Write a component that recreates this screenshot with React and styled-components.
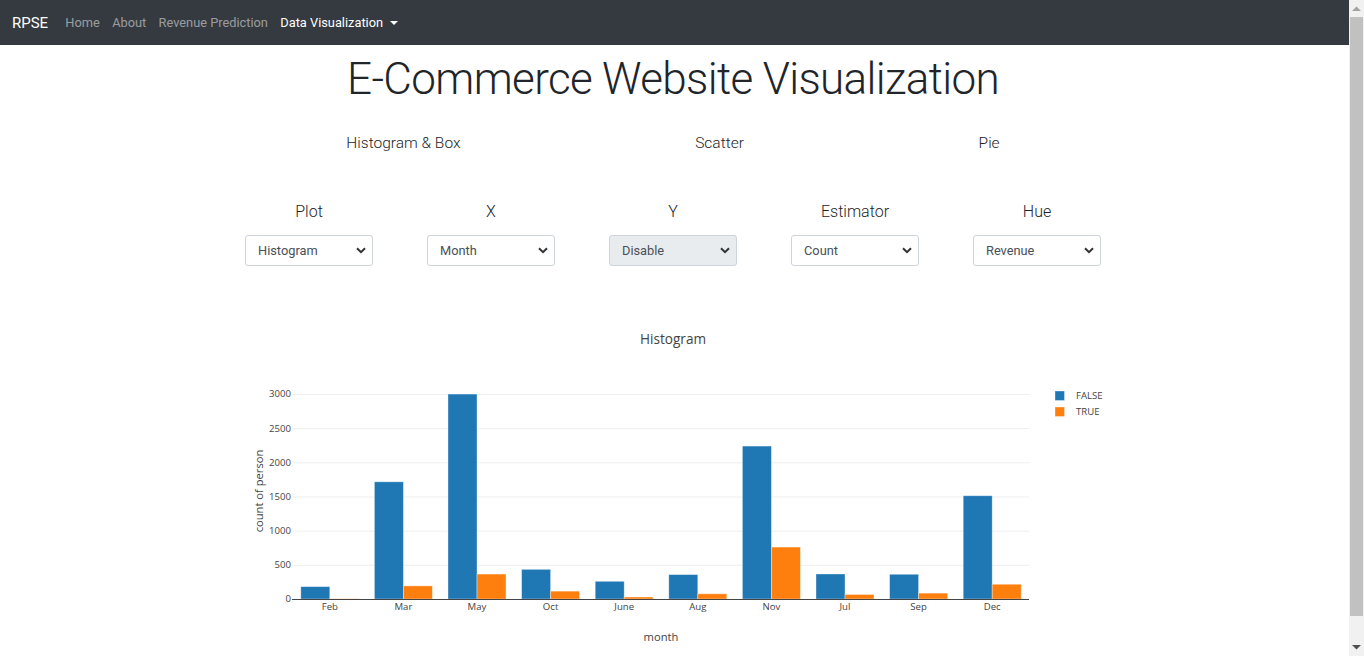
import React from 'react';
import styled, { createGlobalStyle } from 'styled-components';

const GlobalStyle = createGlobalStyle`
  html, body {
    margin: 0;
    padding: 0;
    background: #ffffff;
  }
  body {
    font-family: "Segoe UI", Roboto, "Liberation Sans", sans-serif;
    color: #212529;
  }
`

const Shell = styled.div`
  display: flex;
  align-items: flex-start;
`

const Page = styled.div`
  flex: 1;
  min-width: 0;
`

const ScrollTrack = styled.div`
  position: sticky;
  top: 0;
  width: 15px;
  height: 100vh;
  flex-shrink: 0;
  background-color: #f1f1f1;
  display: flex;
  flex-direction: column;
  align-items: center;
`

const ScrollArrow = styled.div`
  height: 17px;
  width: 100%;
  display: flex;
  align-items: center;
  justify-content: center;
`

const ScrollThumb = styled.div`
  flex: 1;
  width: 13px;
  margin-bottom: 23px;
  background-color: #c1c1c1;
`

const Navbar = styled.nav`
  height: 45px;
  background-color: #343a40;
  display: flex;
  align-items: center;
  padding: 0 12px;
`

const Brand = styled.a`
  font-size: 15px;
  color: #ffffff;
  margin-right: 11px;
  text-decoration: none;
`

const NavList = styled.div`
  display: flex;
  align-items: center;
`

const NavLink = styled.a`
  display: flex;
  align-items: center;
  font-size: 12.8px;
  padding: 0 6.2px;
  color: ${props => (props.$active ? '#ffffff' : 'rgba(255, 255, 255, 0.5)')};
  text-decoration: none;
`

const Caret = styled.span`
  display: inline-block;
  margin-left: 7px;
  border-top: 4px solid #ffffff;
  border-left: 4px solid transparent;
  border-right: 4px solid transparent;
`

const Main = styled.main`
  display: flex;
  flex-direction: column;
  align-items: center;
  padding: 0 3px 10px 0;
`

const Title = styled.h1`
  margin: 8px 0 0;
  font-size: 44px;
  font-weight: 300;
  letter-spacing: -0.65px;
  line-height: 53px;
  color: #212529;
`

const PlotTabs = styled.div`
  margin-top: 25px;
  width: 888px;
  display: flex;
  justify-content: space-around;
`

const TabLink = styled.a`
  font-size: 15.5px;
  font-weight: 300;
  line-height: 24px;
  color: #212529;
  text-decoration: none;
`

const ControlsRow = styled.div`
  margin-top: 45px;
  width: 910px;
  display: grid;
  grid-template-columns: repeat(5, 1fr);
`

const Control = styled.div`
  display: flex;
  flex-direction: column;
  align-items: center;
  gap: 11px;
`

const ControlLabel = styled.div`
  font-size: 16px;
  font-weight: 300;
  line-height: 24px;
`

const SelectBox = styled.div`
  box-sizing: border-box;
  width: 128px;
  height: 31px;
  border: 1px solid #ced4da;
  border-radius: 3px;
  background-color: ${props => (props.$disabled ? '#e9ecef' : '#ffffff')};
  display: flex;
  align-items: center;
  justify-content: space-between;
  padding: 0 6px 0 12px;
  font-size: 12.8px;
  color: #495057;
`

const ChartWrap = styled.div`
  margin-top: 44px;
  width: 912px;
  height: 371px;
`

const Chevron = () => (
  <svg width="10" height="7" viewBox="0 0 10 7">
    <polyline points="1,1.2 5,5.2 9,1.2" fill="none" stroke="#333" strokeWidth="2" />
  </svg>
)

const ArrowIcon = ({ up, color }) => (
  <svg width="9" height="5" viewBox="0 0 9 5">
    <polygon points={up ? '0,5 4.5,0.5 9,5' : '0,0 9,0 4.5,4.5'} fill={color} />
  </svg>
)

const months = [
  ['Feb', 181, 3],
  ['Mar', 1715, 192],
  ['May', 2999, 365],
  ['Oct', 434, 115],
  ['June', 259, 29],
  ['Aug', 357, 76],
  ['Nov', 2238, 760],
  ['Jul', 366, 66],
  ['Sep', 362, 86],
  ['Dec', 1511, 216],
]

const controls = [
  { label: 'Plot', value: 'Histogram' },
  { label: 'X', value: 'Month' },
  { label: 'Y', value: 'Disable', disabled: true },
  { label: 'Estimator', value: 'Count' },
  { label: 'Hue', value: 'Revenue' },
]

function HistogramChart() {
  const plotLeft = 76
  const plotRight = 812
  const zeroY = 289
  const scale = 205 / 3000
  const step = (plotRight - plotLeft) / months.length
  const barW = 29
  const font = '"Open Sans", verdana, arial, sans-serif'
  const ticks = [0, 500, 1000, 1500, 2000, 2500, 3000]

  return (
    <svg width="912" height="371" viewBox="0 0 912 371" fontFamily={font}>
      <text x="456" y="34" textAnchor="middle" fontSize="13.6" fill="#444">Histogram</text>

      {ticks.slice(1).map(t => (
        <line key={t} x1={plotLeft} x2={plotRight} y1={zeroY - t * scale + 0.5} y2={zeroY - t * scale + 0.5} stroke="#eeeeee" strokeWidth="1" />
      ))}

      {months.map(([name, no, yes], i) => {
        const c = plotLeft + step * (i + 0.5)
        return (
          <g key={name}>
            <rect x={c - barW} y={zeroY - no * scale} width={barW} height={no * scale} fill="#1f77b4" stroke="rgba(255,255,255,0.45)" strokeWidth="0.8" />
            <rect x={c} y={zeroY - yes * scale} width={barW} height={yes * scale} fill="#ff7f0e" stroke="rgba(255,255,255,0.45)" strokeWidth="0.8" />
            <text x={c} y="300" textAnchor="middle" fontSize="9.6" fill="#444">{name}</text>
          </g>
        )
      })}

      <line x1={plotLeft - 1} x2={plotRight} y1={zeroY + 0.5} y2={zeroY + 0.5} stroke="#444" strokeWidth="1" />

      {ticks.map(t => (
        <text key={t} x={plotLeft - 2} y={zeroY - t * scale + 3.4} textAnchor="end" fontSize="9.6" fill="#444">{t}</text>
      ))}

      <text x="444" y="331" textAnchor="middle" fontSize="11.2" fill="#444">month</text>
      <text transform="translate(46 181) rotate(-90)" textAnchor="middle" fontSize="11.2" fill="#444">count of person</text>

      <rect x="838" y="81" width="9.5" height="9.5" fill="#1f77b4" stroke="rgba(255,255,255,0.45)" strokeWidth="0.8" />
      <text x="859" y="89" fontSize="9.6" fill="#444">FALSE</text>
      <rect x="838" y="97" width="9.5" height="9.5" fill="#ff7f0e" stroke="rgba(255,255,255,0.45)" strokeWidth="0.8" />
      <text x="859" y="105" fontSize="9.6" fill="#444">TRUE</text>
    </svg>
  )
}

export default function App() {
  return (
    <>
      <GlobalStyle />
      <Shell>
        <Page>
          <Navbar>
            <Brand href="#">RPSE</Brand>
            <NavList>
              <NavLink href="#">Home</NavLink>
              <NavLink href="#">About</NavLink>
              <NavLink href="#">Revenue Prediction</NavLink>
              <NavLink href="#" $active>Data Visualization<Caret /></NavLink>
            </NavList>
          </Navbar>
          <Main>
            <Title>E-Commerce Website Visualization</Title>
            <PlotTabs>
              <TabLink href="#">Histogram &amp; Box</TabLink>
              <TabLink href="#">Scatter</TabLink>
              <TabLink href="#">Pie</TabLink>
            </PlotTabs>
            <ControlsRow>
              {controls.map(ctrl => (
                <Control key={ctrl.label}>
                  <ControlLabel>{ctrl.label}</ControlLabel>
                  <SelectBox $disabled={ctrl.disabled}>
                    <span>{ctrl.value}</span>
                    <Chevron />
                  </SelectBox>
                </Control>
              ))}
            </ControlsRow>
            <ChartWrap>
              <HistogramChart />
            </ChartWrap>
          </Main>
        </Page>
        <ScrollTrack>
          <ScrollArrow><ArrowIcon up color="#a3a3a3" /></ScrollArrow>
          <ScrollThumb />
          <ScrollArrow><ArrowIcon color="#505050" /></ScrollArrow>
        </ScrollTrack>
      </Shell>
    </>
  )
}
